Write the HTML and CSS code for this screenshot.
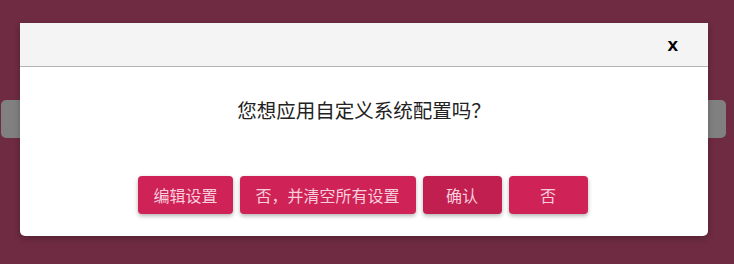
FILE: index.html
```html
<!DOCTYPE html>
<html lang="zh-CN">
<head>
    <meta charset="UTF-8">
    <meta name="viewport" content="width=device-width, initial-scale=1.0">
    <title>系统配置</title>
    <link rel="stylesheet" href="styles.css">
</head>
<body>

<div class="page-bar"></div>

<div class="modal">
    <div class="modal-header">
        <span class="modal-close">x</span>
    </div>
    <div class="modal-body">
        <p class="modal-title">您想应用自定义系统配置吗？</p>
    </div>
    <div class="modal-footer">
        <button class="btn">编辑设置</button>
        <button class="btn btn-wide">否，并清空所有设置</button>
        <button class="btn btn-active">确认</button>
        <button class="btn">否</button>
    </div>
</div>

</body>
</html>
```

FILE: styles.css
```css
body {
    margin: 0;
    height: 264px;
    background-color: #6e2b41;
    font-family: "Noto Sans CJK SC", "Liberation Sans", sans-serif;
    overflow: hidden;
}
.page-bar {
    margin: 100px 8px 0 1px;
    height: 38px;
    background: #808080;
    border-radius: 5px;
}
.modal {
    position: absolute;
    left: 20px;
    top: 23px;
    width: 688px;
    background: #fff;
    border-radius: 0 0 5px 5px;
    box-shadow: 0 2px 6px rgba(0, 0, 0, 0.25);
}
.modal-header {
    height: 43px;
    background: #f4f4f4;
    border-bottom: 1px solid #b3b3b3;
    display: flex;
    align-items: center;
    justify-content: flex-end;
    padding-right: 30px;
}
.modal-close {
    font-family: "Liberation Sans", Arial, sans-serif;
    font-weight: bold;
    font-size: 19px;
    color: #000;
    cursor: pointer;
}
.modal-body {
    padding-top: 31px;
    text-align: center;
}
.modal-title {
    margin: 0;
    font-size: 19.5px;
    line-height: 24px;
    color: #222;
}
.modal-footer {
    display: flex;
    justify-content: center;
    gap: 7px;
    padding: 54px 0 22px;
    margin-left: -2px;
}
.btn {
    font-family: "Noto Sans CJK SC", sans-serif;
    font-size: 16px;
    height: 38px;
    min-width: 79px;
    padding: 0 15px;
    border: none;
    border-radius: 4px;
    background: #cf2257;
    color: #f7cfdc;
    box-shadow: 0 2px 4px rgba(0, 0, 0, 0.3);
    cursor: pointer;
}
.btn-wide {
    padding: 0 16px;
}
.btn-active {
    background: #c21f51;
}
```
